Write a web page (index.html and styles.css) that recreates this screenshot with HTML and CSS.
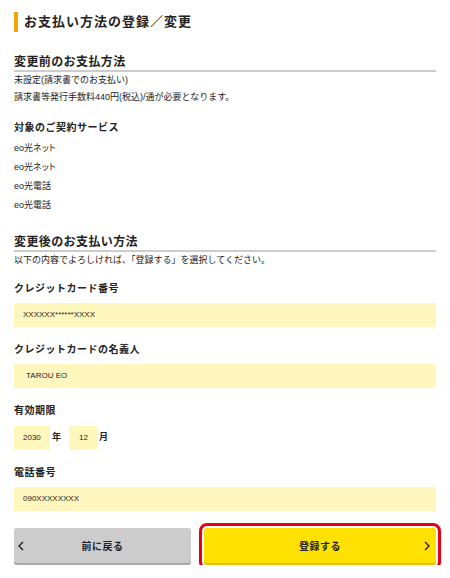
FILE: index.html
```html
<!DOCTYPE html>
<html lang="ja">
<head>
<meta charset="utf-8">
<title>お支払い方法の登録／変更</title>
<link rel="stylesheet" href="styles.css">
</head>
<body>
<main class="page">
  <h1 class="page-title">お支払い方法の登録／変更</h1>

  <section class="section">
    <h2 class="section-title">変更前のお支払方法</h2>
    <p class="text">未設定(請求書でのお支払い)</p>
    <p class="text text-gap">請求書等発行手数料440円(税込)/通が必要となります。</p>
  </section>

  <section class="section services">
    <h3 class="label">対象のご契約サービス</h3>
    <ul class="service-list">
      <li>eo光ネット</li>
      <li>eo光ネット</li>
      <li>eo光電話</li>
      <li>eo光電話</li>
    </ul>
  </section>

  <section class="section after">
    <h2 class="section-title">変更後のお支払い方法</h2>
    <p class="text">以下の内容でよろしければ、「登録する」を選択してください。</p>

    <h3 class="label field-label">クレジットカード番号</h3>
    <div class="value">XXXXXX******XXXX</div>

    <h3 class="label field-label">クレジットカードの名義人</h3>
    <div class="value value-name">TAROU EO</div>

    <h3 class="label field-label">有効期限</h3>
    <div class="date-row">
      <div class="value value-year">2030</div>
      <span class="unit">年</span>
      <div class="value value-month">12</div>
      <span class="unit">月</span>
    </div>

    <h3 class="label field-label">電話番号</h3>
    <div class="value">090XXXXXXXX</div>
  </section>

  <div class="actions">
    <button class="btn btn-back" type="button">
      <svg class="chev" viewBox="0 0 6 10" width="6" height="10"><path d="M5 1 1 5l4 4" fill="none" stroke="#222" stroke-width="1.4"/></svg>
      <span class="btn-text">前に戻る</span>
      <span class="chev-space"></span>
    </button>
    <button class="btn btn-submit" type="button">
      <span class="chev-space"></span>
      <span class="btn-text">登録する</span>
      <svg class="chev chev-right" viewBox="0 0 6 10" width="6" height="10"><path d="M1 1l4 4-4 4" fill="none" stroke="#222" stroke-width="1.4"/></svg>
    </button>
  </div>
</main>
</body>
</html>
```

FILE: styles.css
```css
* { box-sizing: border-box; }

html, body {
  margin: 0;
  padding: 0;
  background: #ffffff;
}

body {
  font-family: "Liberation Sans", "Noto Sans CJK JP", sans-serif;
  color: #222222;
}

.page {
  width: 450px;
  padding: 12px 14px 0 14px;
}

.page-title {
  margin: 0;
  height: 20px;
  line-height: 20px;
  border-left: 4px solid #f5a300;
  padding-left: 6px;
  font-size: 13px;
  font-weight: 700;
  letter-spacing: 1px;
}

.section-title {
  margin: 0;
  font-size: 12px;
  line-height: 16px;
  font-weight: 700;
  letter-spacing: 0.4px;
  border-bottom: 2px solid #cccccc;
}

.section { margin: 0; }
.section:first-of-type { margin-top: 22px; }

.text {
  margin: 0;
  font-size: 9px;
  line-height: 16px;
}

.text-gap { margin-top: 1px; }

.label {
  margin: 0;
  font-size: 10px;
  line-height: 16px;
  font-weight: 700;
  letter-spacing: 0.5px;
}

.services { margin-top: 15px; }

.service-list {
  list-style: none;
  margin: 3px 0 0 0;
  padding: 0;
}

.service-list li {
  font-size: 9px;
  line-height: 19px;
  font-feature-settings: "palt";
}

.after { margin-top: 19px; }

.field-label { margin-top: 13px; }
.value + .field-label,
.date-row + .field-label { margin-top: 15px; }

.value {
  margin-top: 6px;
  height: 24px;
  line-height: 24px;
  background: #fff7bd;
  padding-left: 9px;
  font-size: 8px;
}

.value-name { padding-left: 12px; }

.date-row {
  display: flex;
  align-items: center;
  margin-top: 7px;
}

.date-row .value { margin-top: 0; }

.value-year { width: 36px; }
.value-month { width: 28px; padding-left: 10px; }

.unit {
  font-size: 9px;
  font-weight: 700;
  line-height: 24px;
  margin-top: -3px;
  padding-left: 2px;
  width: 19px;
}

.actions {
  display: grid;
  grid-template-columns: 177px 1fr;
  column-gap: 13px;
  margin-top: 17px;
}

.btn {
  display: grid;
  grid-template-columns: 20px 1fr 20px;
  align-items: center;
  height: 37px;
  border: 0;
  border-radius: 3px;
  padding: 0 0 2px 0;
  font-family: inherit;
  font-size: 10px;
  font-weight: 700;
  letter-spacing: 0.5px;
  color: #222222;
  cursor: pointer;
}

.btn-back {
  background: #cccccc;
  box-shadow: inset 0 -2px 0 #a9a9a9;
}

.btn-submit {
  background: #ffe100;
  box-shadow: inset 0 -2px 0 #e0c400;
  outline: 3px solid #e60012;
  outline-offset: 2px;
}

.chev { margin-left: 4px; }
.chev-right { margin-left: 0; justify-self: end; margin-right: 6px; }
.btn-text { text-align: center; }
```
